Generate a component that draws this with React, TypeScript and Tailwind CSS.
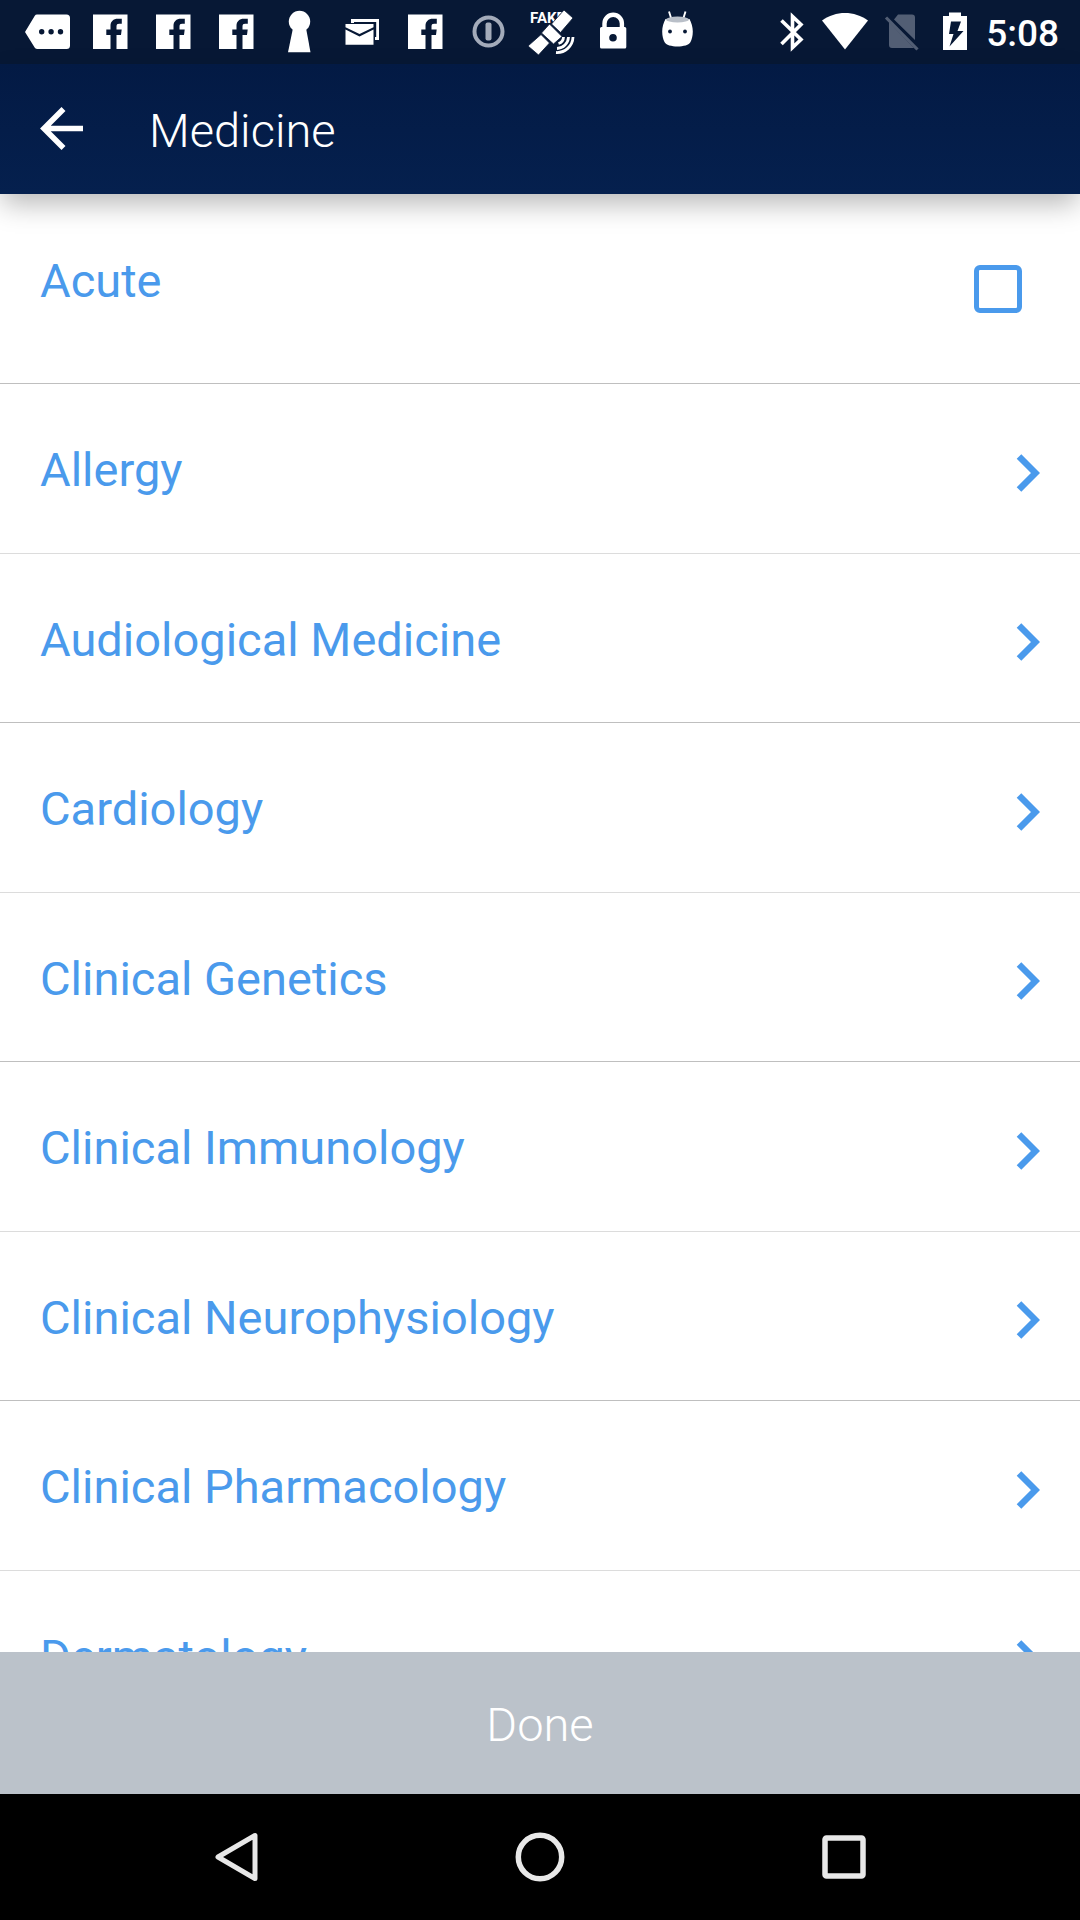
import { useState } from "react";
import type { ReactNode } from "react";

const categories = [
  "Allergy",
  "Audiological Medicine",
  "Cardiology",
  "Clinical Genetics",
  "Clinical Immunology",
  "Clinical Neurophysiology",
  "Clinical Pharmacology",
  "Dermatology",
];

function StatusIcon({ label, children }: { label: string; children: ReactNode }) {
  return (
    <svg role="img" aria-label={label} viewBox="0 0 48 64" className="h-16 w-12 shrink-0" fill="white">
      {children}
    </svg>
  );
}

function FacebookIcon() {
  return (
    <StatusIcon label="Facebook">
      <path d="M6 14.500H40.500V49H29.500V35h4.500l.7-5.500h-5.200v-3c0-2 .8-2.700 2.600-2.700h2.700v-5h-4c-4.400 0-7.300 2.700-7.300 7v3.700h-4.200V35h4.200v14H6z" />
    </StatusIcon>
  );
}

function NotificationIcons() {
  return (
    <div className="flex items-center gap-[15px]">
      <StatusIcon label="More notifications">
        <path
          fillRule="evenodd"
          d="M13 14.500h29.500a3.500 3.500 0 0 1 3.500 3.500v27.500a3.500 3.500 0 0 1-3.500 3.500H13c-1 0-1.700-.5-2.200-1.200L1 32l9.800-16.300c.5-.8 1.200-1.200 2.200-1.200zM17.700 29a2.700 2.700 0 1 0 0 5.400 2.700 2.700 0 0 0 0-5.400zm9.400 0a2.700 2.700 0 1 0 0 5.400 2.700 2.700 0 0 0 0-5.400zm9.400 0a2.700 2.700 0 1 0 0 5.400 2.700 2.700 0 0 0 0-5.400z"
        />
      </StatusIcon>
      <FacebookIcon />
      <FacebookIcon />
      <FacebookIcon />
      <StatusIcon label="Keyhole">
        <circle cx="23.500" cy="21.500" r="10.700" />
        <path d="M17 28h13l4.500 24.300h-22.500z" />
      </StatusIcon>
      <StatusIcon label="Mail">
        <path d="M12 23v-4h28v21h-4v-3h1.200V22H15v1z" />
        <path d="M6.500 24h28v3.200L20.500 34 6.500 27.200z" />
        <path d="M6.500 29.500 20.500 36.500l14-7v15.300h-28z" />
      </StatusIcon>
      <FacebookIcon />
      <StatusIcon label="1Password">
        <circle cx="23.500" cy="31.500" r="14" fill="none" stroke="#a3abba" strokeWidth="4" />
        <rect x="20.500" y="22.500" width="6" height="18" rx="2" fill="#a3abba" />
      </StatusIcon>
      <StatusIcon label="Fake GPS">
        <text x="2" y="23" fontSize="15" fontWeight="700" fontFamily="Roboto, sans-serif">
          FAKE
        </text>
        <g stroke="#071835" strokeWidth="0.800">
          <path d="m36 10 9 8-12.500 14.500-9-8.500z" />
          <path d="m13 34.500 8.500 8.500L10.500 55 0 46z" />
          <path d="m21.500 24 12.500 12.500-8.500 7.500-12-11z" />
        </g>
        <path
          d="M30.500 43.500a7 7 0 0 0 5-6.500M29 48.500a12 12 0 0 0 11.500-11.500M28 52.500a16 16 0 0 0 17-15.500"
          fill="none"
          stroke="white"
          strokeWidth="2.800"
        />
      </StatusIcon>
      <StatusIcon label="Lock">
        <path d="M13.500 29v-5.500a8.700 8.700 0 0 1 17.400 0V29" fill="none" stroke="white" strokeWidth="4.400" />
        <path
          fillRule="evenodd"
          d="M10.500 27h23.300a1.500 1.500 0 0 1 1.500 1.500V47a1.500 1.500 0 0 1-1.500 1.500H10.500A1.500 1.500 0 0 1 9 47V28.500a1.500 1.500 0 0 1 1.500-1.500zM22 34a3.800 3.800 0 1 0 0 7.600 3.800 3.800 0 0 0 0-7.600z"
        />
      </StatusIcon>
      <StatusIcon label="Android">
        <path d="m15 11.500 2.200 7M31.500 11.500l-2.200 7" fill="none" stroke="white" strokeWidth="1.900" />
        <path d="M11.500 19h24c2 4 3.300 8 3.300 12.500 0 4.500-1 8-2.300 10.500-2.500 6-23.500 6-26 0-1.300-2.500-2.300-6-2.300-10.500C8.200 27 9.500 23 11.500 19z" />
        <ellipse cx="23.500" cy="19.500" rx="11.500" ry="3" fill="#b9bfc8" />
        <circle cx="16" cy="31.500" r="1.900" fill="#071835" />
        <circle cx="31" cy="31.500" r="1.900" fill="#071835" />
      </StatusIcon>
    </div>
  );
}

function SystemIcons() {
  return (
    <div className="flex items-center">
      <svg role="img" aria-label="Bluetooth" viewBox="0 0 24 64" className="h-16 w-6" fill="none" stroke="white" strokeWidth="3.600">
        <path d="M1.500 20.500 21 39.500 12.500 47.500V16.500L21 24.500 1.500 44" />
      </svg>
      <svg role="img" aria-label="Wi-Fi" viewBox="0 0 48 64" className="ml-[17px] h-16 w-12" fill="white">
        <path d="M1 20.500c13.500-10 32.500-10 46 0L24 49.500z" />
      </svg>
      <svg role="img" aria-label="No SIM" viewBox="0 0 36 64" className="ml-[15px] h-16 w-9">
        <path
          d="M14 14.500h14a3 3 0 0 1 3 3v22.500L10 19.500zM5 22l25 26H8a3 3 0 0 1-3-3z"
          fill="#525e74"
        />
        <path d="M2 17.500 33.500 49.500" stroke="#525e74" strokeWidth="3.200" />
      </svg>
      <svg role="img" aria-label="Charging" viewBox="0 0 26 64" className="ml-[22px] h-16 w-[26px]" fill="white">
        <path
          fillRule="evenodd"
          d="M7 12.500h12v3.500h6V50H1V16h6zM9 21.500 7 34h4.500L7.500 46.500 21.500 31h-6l3.500-9.500z"
        />
      </svg>
      <span className="mt-0.5 ml-[18px] text-[37px] leading-none font-medium">5:08</span>
    </div>
  );
}

function Chevron() {
  return (
    <svg aria-hidden="true" viewBox="0 0 24 38" className="mt-2 h-[38px] w-6 shrink-0" fill="none" stroke="#4a9aec" strokeWidth="6.500">
      <path d="M3 2.500 19.500 19 3 35.500" />
    </svg>
  );
}

export default function App() {
  const [acute, setAcute] = useState(false);

  return (
    <div className="flex h-screen w-full flex-col overflow-hidden bg-white font-[Roboto,sans-serif] text-[47px] leading-none">
      <div className="flex h-16 shrink-0 items-center justify-between bg-[#071835] pr-[21px] pl-6 text-white">
        <NotificationIcons />
        <SystemIcons />
      </div>

      <header className="z-10 flex h-[130px] shrink-0 items-center bg-linear-to-b from-[#031a44] to-[#05204e] px-10 text-white shadow-[0_12px_26px_-2px_rgba(0,0,0,0.28)]">
        <button type="button" aria-label="Back" className="-mt-0.5 shrink-0">
          <svg viewBox="0 0 43 43" className="size-[43px]" fill="none" stroke="white" strokeWidth="5.600">
            <path d="M23.500 2 4 21.500 23.500 41M4 21.500H43" />
          </svg>
        </button>
        <h1 className="mt-0.5 ml-[66px] font-light">Medicine</h1>
      </header>

      <main className="min-h-0 flex-1 overflow-hidden text-[#4a9aec]">
        <div className="flex h-[190px] items-center justify-between border-b border-[#bfbfbf] pr-[58px] pl-10">
          <label htmlFor="acute" className="mb-4">
            Acute
          </label>
          <input
            id="acute"
            type="checkbox"
            checked={acute}
            onChange={(e) => setAcute(e.target.checked)}
            className="size-12 appearance-none rounded-md border-[5px] border-[#4a9aec] checked:bg-[#4a9aec]"
          />
        </div>
        <ul>
          {categories.map((name) => (
            <li
              key={name}
              className="h-[170px] border-b border-[#dcdcdc] even:h-[169px] even:border-[#bfbfbf]"
            >
              <button type="button" className="flex size-full items-center justify-between px-10 text-left">
                <span className="mt-0.5">{name}</span>
                <Chevron />
              </button>
            </li>
          ))}
        </ul>
      </main>

      <button type="button" className="h-[142px] shrink-0 bg-[#bbc2ca] pt-0.5 font-light text-white">
        Done
      </button>

      <nav className="flex h-[126px] shrink-0 items-center bg-black px-[84px]">
        <button type="button" aria-label="Back" className="flex flex-1 justify-center">
          <svg viewBox="0 0 50 50" className="size-[50px]" fill="none" stroke="#e8e8e8" strokeWidth="5" strokeLinejoin="round">
            <path d="M44 3.500v43L7 25z" />
          </svg>
        </button>
        <button type="button" aria-label="Home" className="flex flex-1 justify-center">
          <svg viewBox="0 0 50 50" className="size-[50px]" fill="none" stroke="#e8e8e8" strokeWidth="5.500">
            <circle cx="25" cy="25" r="21.700" />
          </svg>
        </button>
        <button type="button" aria-label="Recent apps" className="flex flex-1 justify-center">
          <svg viewBox="0 0 50 50" className="size-[50px]" fill="none" stroke="#e8e8e8" strokeWidth="5.500">
            <rect x="6" y="6" width="38" height="38" rx="1.500" />
          </svg>
        </button>
      </nav>
    </div>
  );
}
